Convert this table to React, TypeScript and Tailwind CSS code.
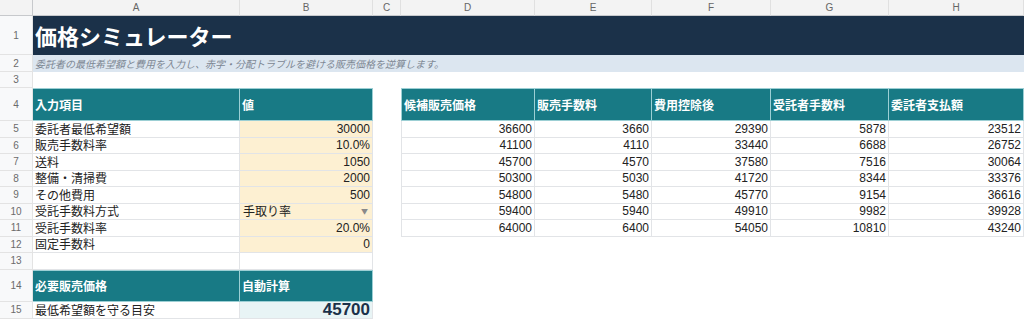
import React from "react";

const JP = "font-['Noto_Sans_CJK_JP','Noto_Sans',sans-serif]";
const NUM = "font-['Liberation_Sans',Arial,sans-serif]";

const cols = ["A", "B", "C", "D", "E", "F", "G", "H"];

const inputs: { label: string; value: string; dropdown?: boolean }[] = [
  { label: "委託者最低希望額", value: "30000" },
  { label: "販売手数料率", value: "10.0%" },
  { label: "送料", value: "1050" },
  { label: "整備・清掃費", value: "2000" },
  { label: "その他費用", value: "500" },
  { label: "受託手数料方式", value: "手取り率", dropdown: true },
  { label: "受託手数料率", value: "20.0%" },
  { label: "固定手数料", value: "0" },
];

const tableHead = ["候補販売価格", "販売手数料", "費用控除後", "受託者手数料", "委託者支払額"];
const tableRows = [
  [36600, 3660, 29390, 5878, 23512],
  [41100, 4110, 33440, 6688, 26752],
  [45700, 4570, 37580, 7516, 30064],
  [50300, 5030, 41720, 8344, 33376],
  [54800, 5480, 45770, 9154, 36616],
  [59400, 5940, 49910, 9982, 39928],
  [64000, 6400, 54050, 10810, 43240],
];

function RowHead({ n }: { n: number }) {
  return (
    <div
      className={`flex items-center justify-center bg-[#f8f9fa] border-r border-b border-[#e3e3e3] text-[10px] text-[#6b6b6b] ${NUM}`}
    >
      {n}
    </div>
  );
}

function Empty({ wide }: { wide?: boolean }) {
  return <div className={wide ? "col-span-6 bg-white" : "bg-white"} />;
}

function Header({ children, left }: { children: React.ReactNode; left?: boolean }) {
  return (
    <div
      className={`flex items-center bg-[#187a85] px-[2px] text-[12px] font-bold text-white border-r border-b border-t border-[#9ccfd4] ${JP} ${left ? "border-l" : ""}`}
    >
      {children}
    </div>
  );
}

function Label({ children }: { children: React.ReactNode }) {
  return (
    <div
      className={`flex items-center px-[2px] bg-white border-r border-b border-[#e2e4e7] text-[12px] text-[#222] ${JP}`}
    >
      {children}
    </div>
  );
}

function NumCell({ children, left, cream }: { children: React.ReactNode; left?: boolean; cream?: boolean }) {
  return (
    <div
      className={`flex items-center justify-end px-[2px] border-r border-b border-[#e2e4e7] text-[12px] text-[#222] ${NUM} ${cream ? "bg-[#fdf0d2]" : "bg-white"} ${left ? "border-l" : ""}`}
    >
      {children}
    </div>
  );
}

export default function App() {
  return (
    <div className="w-[1024px] h-[319px] overflow-hidden bg-white">
      <div className="grid grid-cols-[33px_207px_133px_28px_134px_117px_119px_118px_135px] grid-rows-[16px_39px_17px_16px_33px_16.5px_16.5px_16.5px_16.5px_16.5px_16.5px_16.5px_16.5px_16.5px_32px_17px]">
        {/* column headers */}
        <div className="bg-[#f3f3f3] border-r border-b border-[#c7c9cc]" />
        {cols.map((c) => (
          <div
            key={c}
            className={`flex items-center justify-center bg-[#f3f3f3] border-r border-b border-r-[#e0e0e0] border-b-[#c7c9cc] text-[10px] text-[#666] ${NUM}`}
          >
            {c}
          </div>
        ))}

        {/* row 1 */}
        <RowHead n={1} />
        <div className={`col-span-8 flex items-center bg-[#1b3149] px-[2px] text-[22px] font-bold text-white ${JP}`}>
          価格シミュレーター
        </div>

        {/* row 2 */}
        <RowHead n={2} />
        <div className={`col-span-8 flex items-center bg-[#dce6f0] px-[2px] text-[10px] italic text-[#7d8793] ${JP}`}>
          委託者の最低希望額と費用を入力し、赤字・分配トラブルを避ける販売価格を逆算します。
        </div>

        {/* row 3 */}
        <RowHead n={3} />
        <div className="col-span-8 bg-white" />

        {/* row 4 */}
        <RowHead n={4} />
        <Header>入力項目</Header>
        <Header>値</Header>
        <Empty />
        {tableHead.map((h, i) => (
          <Header key={h} left={i === 0}>
            {h}
          </Header>
        ))}

        {/* rows 5-12 */}
        {inputs.map((inp, i) => {
          const r = 5 + i;
          const tr = tableRows[i];
          return (
            <React.Fragment key={r}>
              <RowHead n={r} />
              <Label>{inp.label}</Label>
              {inp.dropdown ? (
                <div
                  className={`flex items-center justify-between pl-[3px] pr-[4px] bg-[#fdf0d2] border-r border-b border-[#e2e4e7] text-[12px] text-[#222] ${JP}`}
                >
                  <span>{inp.value}</span>
                  <span className="text-[7px] text-[#8a8a8a]">▼</span>
                </div>
              ) : (
                <NumCell cream>{inp.value}</NumCell>
              )}
              <Empty />
              {tr ? (
                tr.map((v, j) => (
                  <NumCell key={j} left={j === 0}>
                    {v}
                  </NumCell>
                ))
              ) : (
                <div className="col-span-5 bg-white" />
              )}
            </React.Fragment>
          );
        })}

        {/* row 13 */}
        <RowHead n={13} />
        <div className="bg-white border-r border-b border-[#e2e4e7]" />
        <div className="bg-white border-r border-b border-[#e2e4e7]" />
        <Empty wide />

        {/* row 14 */}
        <RowHead n={14} />
        <Header>必要販売価格</Header>
        <Header>自動計算</Header>
        <Empty wide />

        {/* row 15 */}
        <RowHead n={15} />
        <Label>最低希望額を守る目安</Label>
        <div
          className={`flex items-end justify-end px-[2px] bg-[#e8f4f5] border-r border-b border-[#e2e4e7] text-[17px] leading-[17px] font-bold text-[#1b3149] ${NUM}`}
        >
          45700
        </div>
        <Empty wide />
      </div>
    </div>
  );
}
